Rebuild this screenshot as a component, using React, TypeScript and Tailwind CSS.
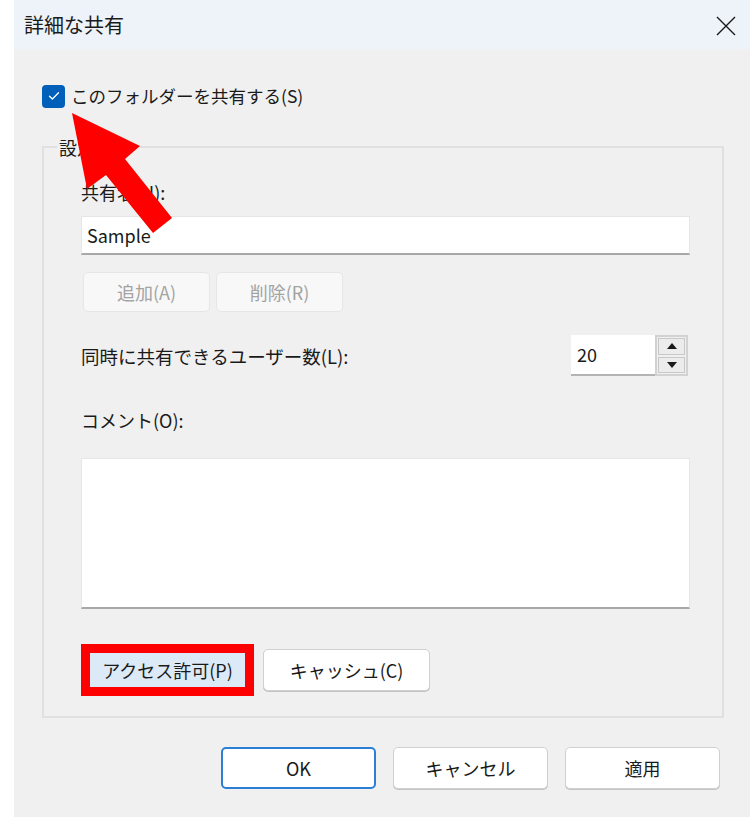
import React from 'react';

const font = { fontFamily: '"Noto Sans CJK JP", "Noto Sans", sans-serif' };

function Checkbox() {
  return (
    <span className="flex h-[23px] w-[23px] items-center justify-center rounded-[4px] bg-[#005fb8]">
      <svg width="12" height="10" viewBox="0 0 12 10" fill="none">
        <path d="M1.5 5.2 L4.4 8 L10.5 1.8" stroke="#ffffff" strokeWidth="1.3" strokeLinecap="round" strokeLinejoin="round" />
      </svg>
    </span>
  );
}

function DialogButton({ label, primary }: { label: string; primary?: boolean }) {
  return (
    <button
      className={
        'h-[42px] w-[155px] rounded-[5px] bg-white text-[18px] text-[#1a1a1a] ' +
        (primary ? 'border-2 border-[#2a7fd4]' : 'border border-[#d0d0d0] shadow-[0_1px_0_#c4c4c4]')
      }
    >
      {label}
    </button>
  );
}

export default function App() {
  return (
    <div className="relative flex h-[817px] w-[750px] bg-white text-[#1a1a1a]" style={font}>
      {/* left strip outside the dialog */}
      <div className="w-[14px] shrink-0 bg-white" />

      <div className="flex flex-1 flex-col bg-[#f0f0f0]">
        {/* Title bar */}
        <div className="flex h-[49px] items-center justify-between bg-[#eef3f9] pl-[10px] pr-[14px]">
          <span className="text-[20px] leading-none">詳細な共有</span>
          <svg width="20" height="20" viewBox="0 0 20 20" className="mt-[2px]">
            <path d="M1 1 L19 19 M19 1 L1 19" stroke="#1a1a1a" strokeWidth="1.4" />
          </svg>
        </div>

        {/* Body */}
        <div className="flex flex-1 flex-col pl-[28px] pr-[26px]">
          <label className="mt-[35px] flex items-center gap-[6px]">
            <Checkbox />
            <span className="text-[17.5px] leading-[24px]">このフォルダーを共有する(S)</span>
          </label>

          {/* group box */}
          <div className="relative mt-[38px] h-[572px] border-2 border-[#e0e0e0] pl-[37px] pr-[32px] pt-[32px]">
            <span className="absolute left-[13px] top-[-13px] bg-[#f0f0f0] px-[2px] text-[18px] leading-[24px]">設定</span>

            <div className="text-[18px] leading-[24px]">共有名(H):</div>
            <div className="mt-[12px] flex h-[39px] items-center border border-[#e6e6e6] border-b-2 border-b-[#a8a8a8] bg-white px-[5px] text-[18px]">
              Sample
            </div>

            <div className="mt-[17px] flex gap-[6px] pl-[2px]">
              <button className="h-[40px] w-[127px] rounded-[5px] border border-[#e6e6e6] bg-[#f8f8f8] text-[18px] text-[#a3a3a3]">
                追加(A)
              </button>
              <button className="h-[40px] w-[127px] rounded-[5px] border border-[#e6e6e6] bg-[#f8f8f8] text-[18px] text-[#a3a3a3]">
                削除(R)
              </button>
            </div>

            <div className="mt-[23px] flex items-center justify-between">
              <span className="text-[18.5px] leading-[24px]">同時に共有できるユーザー数(L):</span>
              <div className="flex h-[41px] pr-[2px]">
                <div className="flex w-[84px] items-center border-b-2 border-b-[#b4b4b4] bg-white pl-[6px] text-[18px]">
                  20
                </div>
                <div className="flex w-[33px] flex-col gap-[2px] border-2 border-[#d2d2d2] bg-[#f0f0f0] p-[1px]">
                  <div className="flex flex-1 items-center justify-center border border-[#c8c8c8] bg-[#ececec]">
                    <svg width="10" height="6" viewBox="0 0 10 6">
                      <path d="M0 6 L5 0 L10 6 Z" fill="#1a1a1a" />
                    </svg>
                  </div>
                  <div className="flex flex-1 items-center justify-center border border-[#c8c8c8] bg-[#ececec]">
                    <svg width="10" height="6" viewBox="0 0 10 6">
                      <path d="M0 0 L5 6 L10 0 Z" fill="#1a1a1a" />
                    </svg>
                  </div>
                </div>
              </div>
            </div>

            <div className="mt-[32px] text-[18px] leading-[24px]">コメント(O):</div>
            <div className="mt-[26px] h-[151px] border border-[#e6e6e6] border-b-2 border-b-[#a8a8a8] bg-white" />

            <div className="mt-[35px] flex items-center gap-[9px]">
              <button className="h-[52px] w-[173px] border-[9px] border-[#ff0000] bg-[#dce9f6] text-[18px]">
                アクセス許可(P)
              </button>
              <button className="h-[42px] w-[167px] rounded-[5px] border border-[#d0d0d0] bg-white text-[18px] shadow-[0_1px_0_#c4c4c4]">
                キャッシュ(C)
              </button>
            </div>
          </div>

          <div className="mt-[29px] flex justify-end gap-[17px] pr-[4px]">
            <DialogButton label="OK" primary />
            <DialogButton label="キャンセル" />
            <DialogButton label="適用" />
          </div>
        </div>
      </div>

      {/* red annotation arrow */}
      <svg className="pointer-events-none absolute left-0 top-0" width="750" height="817">
        <path d="M72 113 L140 146 L125 159 L172 218 L153 233 L106 175 L87 189 Z" fill="#ff0000" />
      </svg>
    </div>
  );
}
